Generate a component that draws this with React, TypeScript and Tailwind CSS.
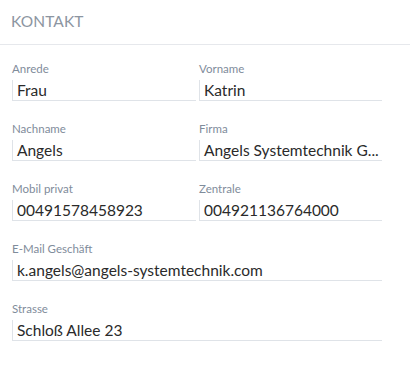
import React from "react";

function Field({ label, value }: { label: string; value: string }) {
  return (
    <div className="flex flex-col min-w-0">
      <div className="h-[17px] text-[11.5px] leading-[17px] text-[#7f8c9b] mt-[-1px]">{label}</div>
      <div className="mt-[3px] h-[21px] border-l border-b border-[#dfe3e8] pl-[4px] text-[15.5px] leading-[20px] text-[#2a2a2a] whitespace-nowrap overflow-hidden">
        {value}
      </div>
    </div>
  );
}

export default function App() {
  return (
    <div className="w-[410px] h-[370px] bg-white" style={{ fontFamily: "Lato, 'Open Sans', sans-serif" }}>
      <div className="h-[45px] border-b border-[#e6e8ec] pl-[11px] pt-[11px] text-[15.5px] leading-[20px] text-[#8c95a1] tracking-[0.1px]">
        KONTAKT
      </div>
      <div className="ml-[12px] w-[370px] pt-[16px] flex flex-col gap-[20px]">
        <div className="grid grid-cols-[184px_183px] gap-x-[3px]">
          <Field label="Anrede" value="Frau" />
          <Field label="Vorname" value="Katrin" />
        </div>
        <div className="grid grid-cols-[184px_183px] gap-x-[3px]">
          <Field label="Nachname" value="Angels" />
          <Field label="Firma" value="Angels Systemtechnik G..." />
        </div>
        <div className="grid grid-cols-[184px_183px] gap-x-[3px]">
          <Field label="Mobil privat" value="00491578458923" />
          <Field label="Zentrale" value="004921136764000" />
        </div>
        <Field label="E-Mail Geschäft" value="k.angels@angels-systemtechnik.com" />
        <Field label="Strasse" value="Schloß Allee 23" />
      </div>
    </div>
  );
}
